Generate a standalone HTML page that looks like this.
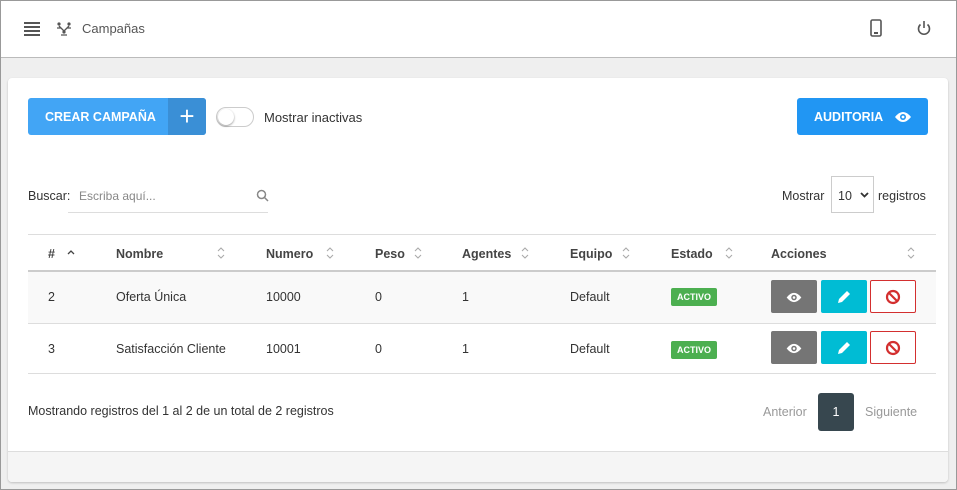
<!DOCTYPE html>
<html><head><meta charset="utf-8"><style>
*{box-sizing:border-box;margin:0;padding:0}
body{width:957px;height:490px;overflow:hidden;font-family:"Liberation Sans",sans-serif;font-size:12.5px;color:#333;background:#efefef;position:relative}
.frame{position:absolute;left:0;top:0;width:957px;height:490px;border:1px solid #999;pointer-events:none;z-index:5}
.hdr{position:absolute;left:0;top:0;width:957px;height:58px;background:#fff;border-bottom:1px solid #bbb}
.card{position:absolute;left:8px;top:78px;width:940px;height:404px;background:#fff;border-radius:4px;box-shadow:0 1px 2px rgba(0,0,0,.2)}
.abs{position:absolute}
.btn{position:absolute;color:#fff;font-weight:bold;font-size:12.5px;border-radius:3px}
.row{position:absolute;left:20px;width:908px;border-top:1px solid #ddd}
.cell{position:absolute}
.hd{font-weight:bold;color:#444}
.act{position:absolute;width:46px;height:33px;border-radius:2px}
.badge{position:absolute;background:#4caf50;color:#fff;font-size:9px;font-weight:bold;padding:4px 6px;border-radius:2px}
.sort{position:absolute;top:11px}
</style></head><body>
<div class="frame"></div>
<div class="hdr">
 <div class="abs" style="left:24px;top:22px;width:16px;height:14px;">
  <div style="height:2px;background:#555;margin-bottom:2px"></div><div style="height:2px;background:#555;margin-bottom:2px"></div><div style="height:2px;background:#555;margin-bottom:2px"></div><div style="height:2px;background:#555"></div></div>
 <svg class="abs" style="left:56px;top:22px" width="16" height="14" viewBox="0 0 16 14"><circle cx="3" cy="2" r="1.6" fill="#555"/><circle cx="13" cy="2" r="1.6" fill="#555"/><circle cx="8" cy="10" r="1.6" fill="#555"/><path d="M3 4L8 9M13 4L8 9M1 6h4M11 6h4M5 13h6" stroke="#555" stroke-width="1.3" fill="none"/></svg>
 <div class="abs" style="left:82px;top:21px;font-size:13px;color:#555">Campañas</div>
 <svg class="abs" style="left:870px;top:19px" width="12" height="18" viewBox="0 0 12 18"><rect x="1" y="1" width="10" height="16" rx="1.5" fill="none" stroke="#555" stroke-width="1.6"/><rect x="4" y="13" width="4" height="2" fill="#555"/></svg>
 <svg class="abs" style="left:916px;top:20px" width="16" height="16" viewBox="0 0 16 16"><path d="M4.5 4.5A5.5 5.5 0 1 0 11.5 4.5" fill="none" stroke="#555" stroke-width="1.6"/><path d="M8 1v7" stroke="#555" stroke-width="1.6"/></svg>
</div>
<div class="card">
 <div class="btn" style="left:20px;top:20px;width:178px;height:37px;background:#42a5f5;overflow:hidden">
  <div class="abs" style="left:17px;top:12px">CREAR CAMPAÑA</div>
  <div class="abs" style="left:140px;top:0;width:38px;height:37px;background:#3a8fd6;font-size:26px;font-weight:normal;text-align:center;line-height:36px">+</div>
 </div>
 <div class="abs" style="left:208px;top:29px;width:38px;height:20px;border:1px solid #ccc;border-radius:10px"><div style="position:absolute;left:1px;top:1px;width:16px;height:16px;border-radius:50%;background:#fff;box-shadow:0 1px 2px rgba(0,0,0,.4)"></div></div>
 <div class="abs" style="left:256px;top:32px;font-size:13px">Mostrar inactivas</div>
 <div class="btn" style="left:789px;top:20px;width:131px;height:37px;background:#2196f3">
  <div class="abs" style="left:17px;top:12px">AUDITORIA</div>
  <svg class="abs" style="left:97px;top:13px" width="18" height="12" viewBox="0 0 18 12"><path d="M1 6Q9 -4 17 6Q9 16 1 6Z" fill="#fff"/><circle cx="9" cy="6" r="3" fill="#2196f3"/><circle cx="9" cy="6" r="1.4" fill="#fff"/></svg>
 </div>
 <div class="abs" style="left:20px;top:111px">Buscar:</div>
 <div class="abs" style="left:60px;top:100px;width:200px;height:35px;border-bottom:1px solid #ddd"><span style="position:absolute;left:11px;top:11px;color:#888;font-size:12px">Escriba aquí...</span>
 <svg style="position:absolute;left:188px;top:11px" width="13" height="13" viewBox="0 0 13 13"><circle cx="5.5" cy="5.5" r="4" fill="none" stroke="#888" stroke-width="1.5"/><path d="M8.5 8.5L12 12" stroke="#888" stroke-width="1.5"/></svg></div>
 <div class="abs" style="left:774px;top:111px">Mostrar</div>
 <div class="abs" style="left:823px;top:98px;width:43px;height:37px;border:1px solid #ccc;"><span style="position:absolute;left:6px;top:12px">10</span><svg style="position:absolute;left:28px;top:15px" width="9" height="6" viewBox="0 0 9 6"><path d="M1 1l3.5 3.5L8 1" stroke="#333" stroke-width="1.8" fill="none"/></svg></div>
 <div class="abs" style="left:870px;top:111px">registros</div>

 <div class="row" style="top:156px;height:38px;border-top:1px solid #ddd;border-bottom:2px solid #ccc">
  <div class="cell hd" style="left:20px;top:12px">#</div>
  <svg class="cell" style="left:39px;top:14px" width="8" height="6" viewBox="0 0 8 6"><path d="M1 5l3-3 3 3" stroke="#444" stroke-width="1.3" fill="none"/></svg>
  <div class="cell hd" style="left:88px;top:12px">Nombre</div>
  <div class="cell hd" style="left:238px;top:12px">Numero</div>
  <div class="cell hd" style="left:347px;top:12px">Peso</div>
  <div class="cell hd" style="left:434px;top:12px">Agentes</div>
  <div class="cell hd" style="left:542px;top:12px">Equipo</div>
  <div class="cell hd" style="left:643px;top:12px">Estado</div>
  <div class="cell hd" style="left:743px;top:12px">Acciones</div>
  <svg class="sort" style="left:189px" width="8" height="14" viewBox="0 0 8 14"><path d="M1 5l3-3 3 3M1 9l3 3 3-3" stroke="#aaa" stroke-width="1.1" fill="none"/></svg>
  <svg class="sort" style="left:298px" width="8" height="14" viewBox="0 0 8 14"><path d="M1 5l3-3 3 3M1 9l3 3 3-3" stroke="#aaa" stroke-width="1.1" fill="none"/></svg>
  <svg class="sort" style="left:386px" width="8" height="14" viewBox="0 0 8 14"><path d="M1 5l3-3 3 3M1 9l3 3 3-3" stroke="#aaa" stroke-width="1.1" fill="none"/></svg>
  <svg class="sort" style="left:493px" width="8" height="14" viewBox="0 0 8 14"><path d="M1 5l3-3 3 3M1 9l3 3 3-3" stroke="#aaa" stroke-width="1.1" fill="none"/></svg>
  <svg class="sort" style="left:594px" width="8" height="14" viewBox="0 0 8 14"><path d="M1 5l3-3 3 3M1 9l3 3 3-3" stroke="#aaa" stroke-width="1.1" fill="none"/></svg>
  <svg class="sort" style="left:697px" width="8" height="14" viewBox="0 0 8 14"><path d="M1 5l3-3 3 3M1 9l3 3 3-3" stroke="#aaa" stroke-width="1.1" fill="none"/></svg>
  <svg class="sort" style="left:879px" width="8" height="14" viewBox="0 0 8 14"><path d="M1 5l3-3 3 3M1 9l3 3 3-3" stroke="#aaa" stroke-width="1.1" fill="none"/></svg>
 </div>
 <div class="row" style="top:194px;height:51px;background:#f9f9f9;border-top:none">
  <div class="cell" style="left:20px;top:18px">2</div><div class="cell" style="left:88px;top:18px">Oferta Única</div><div class="cell" style="left:238px;top:18px">10000</div><div class="cell" style="left:347px;top:18px">0</div><div class="cell" style="left:434px;top:18px">1</div><div class="cell" style="left:542px;top:18px">Default</div>
  <div class="badge" style="left:643px;top:16px">ACTIVO</div>
 </div>
 <div class="row" style="top:245px;height:51px;border-bottom:1px solid #ddd">
  <div class="cell" style="left:20px;top:18px">3</div><div class="cell" style="left:88px;top:18px">Satisfacción Cliente</div><div class="cell" style="left:238px;top:18px">10001</div><div class="cell" style="left:347px;top:18px">0</div><div class="cell" style="left:434px;top:18px">1</div><div class="cell" style="left:542px;top:18px">Default</div>
  <div class="badge" style="left:643px;top:17px">ACTIVO</div>
 </div>
 <div class="act" style="left:763px;top:202px;background:#757575"></div>
 <div class="act" style="left:813px;top:202px;background:#00bcd4"></div>
 <div class="act" style="left:862px;top:202px;border:1px solid #d32f2f;background:#fff"></div>
 <div class="act" style="left:763px;top:253px;background:#757575"></div>
 <div class="act" style="left:813px;top:253px;background:#00bcd4"></div>
 <div class="act" style="left:862px;top:253px;border:1px solid #d32f2f;background:#fff"></div>
 <svg class="abs" style="left:777px;top:214px" width="18" height="11" viewBox="0 0 18 12"><path d="M1 6Q9 -4 17 6Q9 16 1 6Z" fill="#fff"/><circle cx="9" cy="6" r="3" fill="#757575"/><circle cx="9" cy="6" r="1.4" fill="#fff"/></svg>
 <svg class="abs" style="left:777px;top:265px" width="18" height="11" viewBox="0 0 18 12"><path d="M1 6Q9 -4 17 6Q9 16 1 6Z" fill="#fff"/><circle cx="9" cy="6" r="3" fill="#757575"/><circle cx="9" cy="6" r="1.4" fill="#fff"/></svg>
 <svg class="abs" style="left:828px;top:211px" width="16" height="16" viewBox="0 0 16 16"><path d="M2 14l1-4 8-8 3 3-8 8z" fill="#fff"/></svg>
 <svg class="abs" style="left:828px;top:262px" width="16" height="16" viewBox="0 0 16 16"><path d="M2 14l1-4 8-8 3 3-8 8z" fill="#fff"/></svg>
 <svg class="abs" style="left:877px;top:211px" width="16" height="16" viewBox="0 0 16 16"><circle cx="8" cy="8" r="6" fill="none" stroke="#d32f2f" stroke-width="2.2"/><path d="M4 4l8 8" stroke="#d32f2f" stroke-width="2.2"/></svg>
 <svg class="abs" style="left:877px;top:262px" width="16" height="16" viewBox="0 0 16 16"><circle cx="8" cy="8" r="6" fill="none" stroke="#d32f2f" stroke-width="2.2"/><path d="M4 4l8 8" stroke="#d32f2f" stroke-width="2.2"/></svg>

 <div class="abs" style="left:20px;top:326px">Mostrando registros del 1 al 2 de un total de 2 registros</div>
 <div class="abs" style="left:755px;top:327px;color:#999">Anterior</div>
 <div class="abs" style="left:810px;top:315px;width:36px;height:38px;background:#37474f;border-radius:3px;color:#fff;text-align:center;line-height:38px">1</div>
 <div class="abs" style="left:857px;top:327px;color:#999">Siguiente</div>
 <div class="abs" style="left:0;top:373px;width:940px;height:31px;background:#f5f5f5;border-top:1px solid #ddd;border-radius:0 0 4px 4px"></div>
</div>
</body></html>
